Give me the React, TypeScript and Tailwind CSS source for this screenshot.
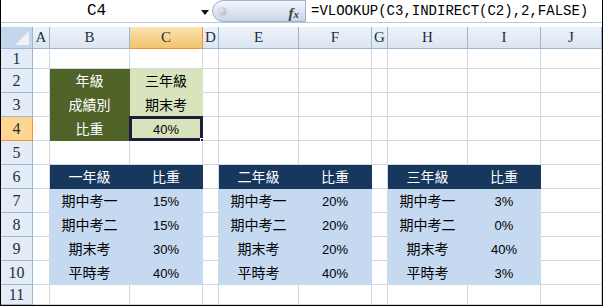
const colLetters = ['A', 'B', 'C', 'D', 'E', 'F', 'G', 'H', 'I', 'J'];

type Kind = 'olive' | 'lime' | 'navy' | 'sky';
type Cell = { t: string; k: Kind; num?: boolean };

const kindCls: Record<Kind, string> = {
  olive: 'bg-[#4f6228] border-[#4f6228] text-white',
  lime: 'bg-[#d8e4bc] border-[#d8e4bc] text-black',
  navy: 'bg-[#17375d] border-[#17375d] text-white',
  sky: 'bg-[#c5d9f1] border-[#c5d9f1] text-black',
};

const cells: Record<string, Cell> = {
  B2: { t: '年級', k: 'olive' },
  B3: { t: '成績別', k: 'olive' },
  B4: { t: '比重', k: 'olive' },
  C2: { t: '三年級', k: 'lime' },
  C3: { t: '期末考', k: 'lime' },
  C4: { t: '40%', k: 'lime', num: true },
};

const tables = [
  { col: ['B', 'C'], title: '一年級', vals: ['15%', '15%', '30%', '40%'] },
  { col: ['E', 'F'], title: '二年級', vals: ['20%', '20%', '20%', '40%'] },
  { col: ['H', 'I'], title: '三年級', vals: ['3%', '0%', '40%', '3%'] },
];
const labels = ['期中考一', '期中考二', '期末考', '平時考'];

tables.forEach((tb) => {
  cells[tb.col[0] + '6'] = { t: tb.title, k: 'navy' };
  cells[tb.col[1] + '6'] = { t: '比重', k: 'navy' };
  labels.forEach((l, i) => {
    cells[tb.col[0] + (7 + i)] = { t: l, k: 'sky' };
    cells[tb.col[1] + (7 + i)] = { t: tb.vals[i], k: 'sky', num: true };
  });
});

function FormulaBar() {
  return (
    <div className="h-[27px] bg-white">
      <div className="flex h-[23px] border-b border-[#b8c6d8]">
        <div className="relative w-[211px] flex items-center justify-center font-['Liberation_Mono',monospace] text-[16px] text-black">
          <span className="mr-[20px]">C4</span>
          <svg className="absolute left-[200px] top-[10px]" width="8" height="5" viewBox="0 0 8 5">
            <path d="M0 0H8L4 5Z" fill="#111" />
          </svg>
        </div>
        <div className="relative w-[94px] h-[22px] rounded-l-full border border-[#9fb2cb] bg-gradient-to-b from-[#f3f6fb] via-[#dde6f2] to-[#c8d6e9]">
          <div className="absolute left-[5px] top-[6px] w-[9px] h-[9px] rounded-full bg-gradient-to-br from-[#fdfdfd] to-[#a9b1bb] border border-[#c5ccd5]" />
          <span className="absolute right-[6px] top-[1px] font-['Liberation_Serif',serif] italic font-bold text-[15px] text-[#3b3b3b]">
            f<span className="text-[11px]">x</span>
          </span>
        </div>
        <div className="flex-1 flex items-center pl-[5px] font-['Liberation_Mono',monospace] text-[14px] text-black">
          =VLOOKUP(C3,INDIRECT(C2),2,FALSE)
        </div>
      </div>
    </div>
  );
}

function Grid() {
  const rows = Array.from({ length: 11 }, (_, i) => i + 1);
  return (
    <div className="grid grid-cols-[32px_17px_80px_73px_16px_80px_73px_16px_80px_73px_61px] grid-rows-[22px_20px_repeat(9,24px)_20px]">
      {/* corner */}
      <div className="relative border-r border-b border-[#9eb6ce] bg-[#c4d6ec]">
        <svg className="absolute right-[3px] bottom-[3px]" width="14" height="14" viewBox="0 0 14 14">
          <path d="M14 0V14H0Z" fill="#eef2f7" />
        </svg>
      </div>
      {colLetters.map((c) =>
        c === 'C' ? (
          <div
            key={c}
            className="flex items-center justify-center border-r border-b border-[#f29436] bg-gradient-to-b from-[#fbe2b0] to-[#f2c36a] font-['Liberation_Serif',serif] text-[15px] text-[#1e2f3c]"
          >
            {c}
          </div>
        ) : (
          <div
            key={c}
            className="flex items-center justify-center border-r border-b border-[#9eb6ce] bg-gradient-to-b from-[#eef3fa] to-[#dbe5f2] font-['Liberation_Serif',serif] text-[15px] text-[#1e2f3c]"
          >
            {c}
          </div>
        )
      )}
      {rows.map((r) => (
        <Row key={r} r={r} />
      ))}
    </div>
  );
}

function Row({ r }: { r: number }) {
  return (
    <>
      {r === 4 ? (
        <div className="flex items-center justify-center border-r border-b border-[#f29436] bg-[#ffd592] font-['Liberation_Serif',serif] text-[16px] text-[#1e2f3c]">
          {r}
        </div>
      ) : (
        <div className="flex items-center justify-center border-r border-b border-[#9eb6ce] bg-[#e4ecf7] font-['Liberation_Serif',serif] text-[16px] text-[#1e2f3c]">
          {r}
        </div>
      )}
      {colLetters.map((c) => {
        const cell = cells[c + r];
        const base =
          "relative flex items-center justify-center pt-[2px] border-r border-b font-['Liberation_Sans','Noto_Sans_CJK_TC',sans-serif]";
        if (!cell) return <div key={c} className={base + ' bg-white border-[#d0d7e5]'} />;
        return (
          <div key={c} className={base + ' ' + kindCls[cell.k] + (cell.num ? ' text-[13px]' : ' text-[14px]')}>
            {cell.t}
            {c === 'C' && r === 4 && (
              <>
                <div className="absolute -left-[1px] -top-[1px] w-[74px] h-[25px] border-[3px] border-[#221c3a]" />
                <div className="absolute -right-[4px] -bottom-[4px] w-[6px] h-[6px] bg-[#221c3a] border border-white" />
              </>
            )}
          </div>
        );
      })}
    </>
  );
}

export default function App() {
  return (
    <div className="w-[603px] h-[306px] overflow-hidden bg-white border-x border-b border-black">
      <FormulaBar />
      <Grid />
    </div>
  );
}
